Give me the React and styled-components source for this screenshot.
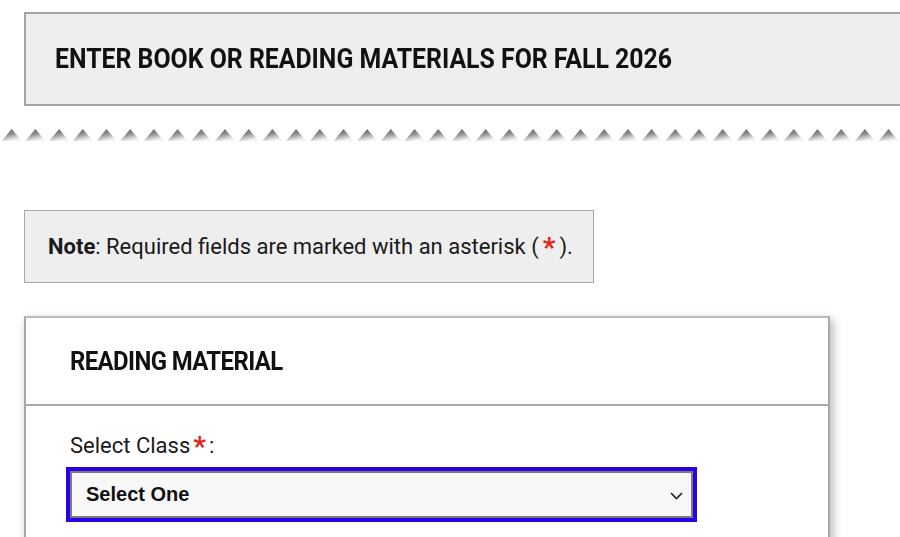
import React from "react";
import styled, { createGlobalStyle } from "styled-components";

const Global = createGlobalStyle`
  html, body {
    margin: 0;
    padding: 0;
    background: #fff;
    overflow: hidden;
  }
  body {
    font-family: Roboto, "Liberation Sans", sans-serif;
    color: #111;
  }
`;

const Page = styled.div`
  width: 900px;
  padding-top: 12px;
  overflow: hidden;
`;

const Banner = styled.div`
  margin-left: 24px;
  width: 920px;
  height: 90px;
  box-sizing: content-box;
  background: #eeeeee;
  border: 2px solid #a3a3a3;
  display: flex;
  align-items: center;
  padding-left: 29px;
`;

// Roboto squeezed a little to stand in for the condensed heading face
const Heading = styled.h1`
  margin: 0;
  display: inline-block;
  white-space: nowrap;
  font-family: Roboto, sans-serif;
  font-weight: 700;
  font-size: ${(p) => p.size || 27}px;
  letter-spacing: ${(p) => p.track ?? 0}px;
  text-transform: uppercase;
  color: #111;
  transform: scaleX(0.92);
  transform-origin: left center;
`;

const Zigzag = styled.svg`
  display: block;
  width: 900px;
  height: 18px;
  margin-top: 19px;
`;

const Note = styled.div`
  margin: 67px 0 0 24px;
  width: 545px;
  height: 71px;
  background: #eeeeee;
  border: 1px solid #a8a8a8;
  display: flex;
  align-items: center;
  padding-left: 23px;
  box-sizing: content-box;
  font-size: 22px;
  color: #1a1a1a;
  b {
    font-weight: 700;
  }
`;

const Star = styled.span`
  color: #e0241b;
  font-weight: 700;
  font-size: ${(p) => p.size || 28}px;
  line-height: 0;
  position: relative;
  top: 3px;
  margin: 0 ${(p) => p.gap || 4}px;
`;

const Card = styled.section`
  margin: 33px 0 0 24px;
  width: 802px;
  height: 240px;
  border: 2px solid #a8a8a8;
  border-top-color: #bdbdbd;
  border-bottom: none;
  box-shadow: 3px 3px 9px rgba(0, 0, 0, 0.28);
  background: #fff;
`;

const CardHead = styled.div`
  height: 86px;
  display: flex;
  align-items: center;
  padding-left: 44px;
  border-bottom: 2px solid #a8a8a8;
`;

const CardBody = styled.div`
  padding: 27px 0 0 44px;
`;

const Label = styled.label`
  display: block;
  font-size: 22px;
  line-height: 26px;
  color: #1a1a1a;
  margin-bottom: 8px;
`;

const SelectWrap = styled.div`
  position: relative;
  width: 607px;
  height: 47px;
  margin-left: -4px;
  border: 4px solid #2a00e6;
  background: #f8f8f8;
  box-shadow: inset 0 0 0 2px #7a7a7a;
  display: flex;
  align-items: center;
  padding-left: 16px;
  font-family: "Liberation Sans", Arial, sans-serif;
  font-weight: 700;
  font-size: 20px;
  color: #111;
  box-sizing: content-box;
`;

const Chevron = styled.svg`
  position: absolute;
  right: 10px;
  top: 50%;
  margin-top: -3px;
`;

export default function App() {
  const peaks = Array.from({ length: 39 });
  return (
    <>
      <Global />
      <Page>
        <Banner>
          <Heading>Enter Book or Reading Materials for Fall 2026</Heading>
        </Banner>

        <Zigzag viewBox="0 0 900 18">
          <defs>
            <linearGradient id="shade" x1="0" y1="0" x2="0.35" y2="1">
              <stop offset="0" stopColor="#5a5a5a" />
              <stop offset="0.5" stopColor="#8c8c8c" />
              <stop offset="1" stopColor="#f2f2f2" />
            </linearGradient>
            <filter id="soft" x="-10%" y="-30%" width="120%" height="160%">
              <feGaussianBlur stdDeviation="0.7" />
            </filter>
          </defs>
          <g filter="url(#soft)">
            {peaks.map((_, i) => {
              const x = 1.7 + i * 23.7;
              return (
                <polygon
                  key={i}
                  points={`${x},16 ${x + 10},4 ${x + 20},16`}
                  fill="url(#shade)"
                />
              );
            })}
          </g>
        </Zigzag>

        <Note>
          <span>
            <b>Note</b>: Required fields are marked with an asterisk (<Star>*</Star>).
          </span>
        </Note>

        <Card>
          <CardHead>
            <Heading size={26} track={-0.65}>Reading Material</Heading>
          </CardHead>
          <CardBody>
            <Label>
              Select Class<Star gap={3}>*</Star>:
            </Label>
            <SelectWrap>
              Select One
              <Chevron width="13" height="8" viewBox="0 0 13 8">
                <path d="M1 1l5.5 5.5L12 1" fill="none" stroke="#222" strokeWidth="1.6" />
              </Chevron>
            </SelectWrap>
          </CardBody>
        </Card>
      </Page>
    </>
  );
}
